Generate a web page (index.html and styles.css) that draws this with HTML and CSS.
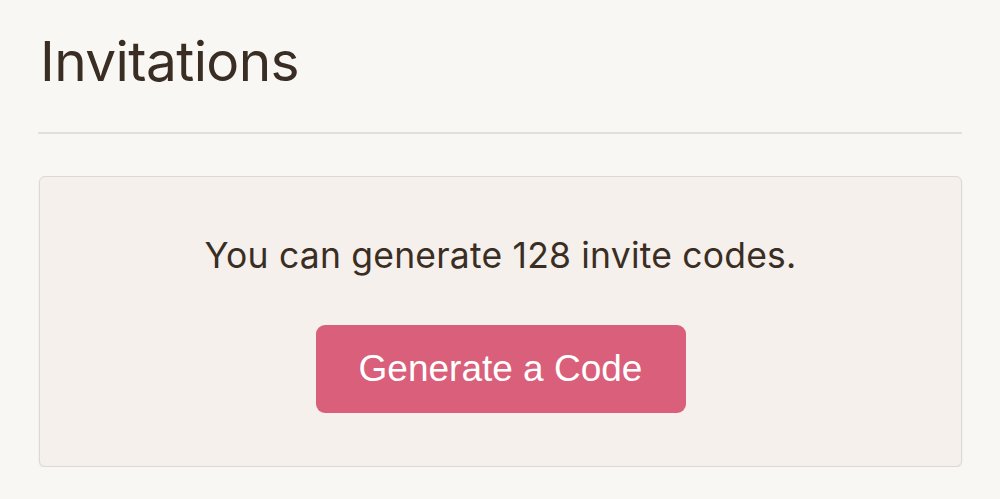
FILE: index.html
```html
<!DOCTYPE html>
<html>
<head>
<meta charset="utf-8">
<link rel="stylesheet" href="styles.css">
</head>
<body>
<main class="page">
  <h1 class="title">Invitations</h1>
  <hr class="divider">
  <section class="card">
    <p class="message">You can generate 128 invite codes.</p>
    <button class="btn">Generate a Code</button>
  </section>
</main>
</body>
</html>
```
FILE: styles.css
```css
html, body {
  margin: 0;
  padding: 0;
  background: #f9f7f4;
}
body {
  font-family: Inter, "Noto Sans", sans-serif;
  color: #3a2e24;
}
.page {
  padding: 28px 38px 0 38px;
}
.title {
  margin: 0 0 0 2px;
  font-size: 55px;
  font-weight: 400;
  line-height: 66px;
  letter-spacing: -0.6px;
}
.divider {
  margin: 38px 0 0 0;
  border: 0;
  height: 2px;
  background: #e3dfda;
}
.card {
  margin: 42px 0 0 1px;
  height: 291px;
  box-sizing: border-box;
  border: 1px solid #dcd8d3;
  border-radius: 6px;
  background: #f5f0eb;
  box-shadow: 0 1px 2px rgba(0,0,0,0.08);
  display: flex;
  flex-direction: column;
  align-items: center;
  padding-top: 57px;
}
.message {
  margin: 0;
  font-size: 35.5px;
  line-height: 44px;
  letter-spacing: 0.2px;
}
.btn {
  margin-top: 47px;
  width: 370px;
  height: 88px;
  border: 0;
  border-radius: 9px;
  background: #d95f7a;
  color: #ffffff;
  font-family: "Liberation Sans", Arial, sans-serif;
  font-size: 37px;
}
```
